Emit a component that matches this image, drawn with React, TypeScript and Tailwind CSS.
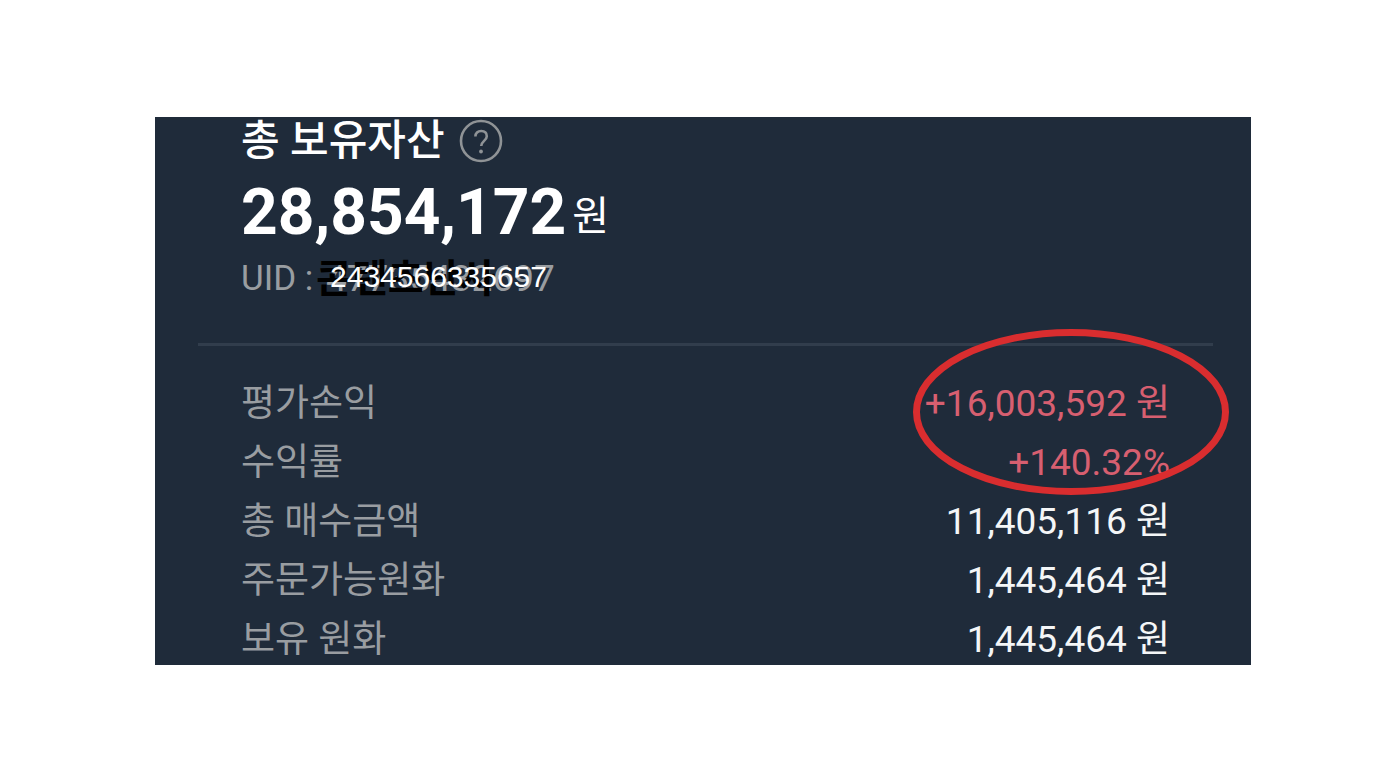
import React from "react";

type Row = { label: string; value: string; profit?: boolean };

const rows: Row[] = [
  { label: "평가손익", value: "+16,003,592 원", profit: true },
  { label: "수익률", value: "+140.32%", profit: true },
  { label: "총 매수금액", value: "11,405,116 원" },
  { label: "주문가능원화", value: "1,445,464 원" },
  { label: "보유 원화", value: "1,445,464 원" },
];

function HelpButton() {
  return (
    <button type="button" aria-label="도움말" className="h-11 w-11 shrink-0">
      <svg viewBox="0 0 44 44" className="h-11 w-11" fill="none" stroke="#8f9396" strokeWidth="2.6">
        <circle cx="22" cy="22" r="20" />
        <path d="M16.4 17.6c0-3.4 2.3-5.6 5.8-5.6s5.6 2.1 5.6 5.2c0 4.4-5.6 5-5.6 9.8" />
        <circle cx="22" cy="32.5" r="1.9" fill="#8f9396" stroke="none" />
      </svg>
    </button>
  );
}

export default function App() {
  return (
    <main className="min-h-screen bg-white pt-[117px] pr-[135px] pl-[155px] font-[Roboto,'Noto_Sans_CJK_KR',sans-serif]">
      <section className="overflow-hidden bg-[#1f2b3a] pr-[38px] pl-[43px]">
        <header className="px-[43px]">
          <div className="flex h-12 items-center gap-3.5">
            <h1 className="text-[42px] leading-[46px] font-medium text-white">총 보유자산</h1>
            <HelpButton />
          </div>
          <p className="flex items-center gap-1.5 pt-1 text-white">
            <span className="text-[64px] leading-[88px] font-bold">28,854,172</span>
            <span className="pt-2 text-[40px] leading-[80px]">원</span>
          </p>
          <div className="flex h-11 items-center text-[35px] leading-11 text-[#999da1]">
            <span className="whitespace-pre">UID : </span>
            <span className="relative text-[37px]">
              <span className="pl-1">47735432697</span>
              <span className="absolute top-0 -left-1.5 text-[39px] font-bold whitespace-nowrap text-black">콘텐츠난사</span>
              <span className="absolute top-0 left-2 font-['Liberation_Sans',sans-serif] text-[30px] leading-10 whitespace-nowrap text-white">2434566335657</span>
            </span>
          </div>
        </header>
        <hr className="mt-[42px] border-t-[3px] border-[#313d4c]" />
        <div className="relative px-[43px] pt-7">
          <dl className="-mb-1">
            {rows.map((row) => (
              <div key={row.label} className="flex h-[59px] items-center justify-between text-[37px] leading-[59px]">
                <dt className="text-[#999da1]">{row.label}</dt>
                <dd className={row.profit ? "text-[#d75f70]" : "text-[#f4f6f7]"}>{row.value}</dd>
              </div>
            ))}
          </dl>
          <svg viewBox="0 0 316 166" className="absolute -top-[17px] -right-4 h-[166px] w-[316px]" fill="none">
            <ellipse cx="158" cy="83" rx="154.5" ry="79.5" stroke="#d92d2f" strokeWidth="7" />
          </svg>
        </div>
      </section>
    </main>
  );
}
